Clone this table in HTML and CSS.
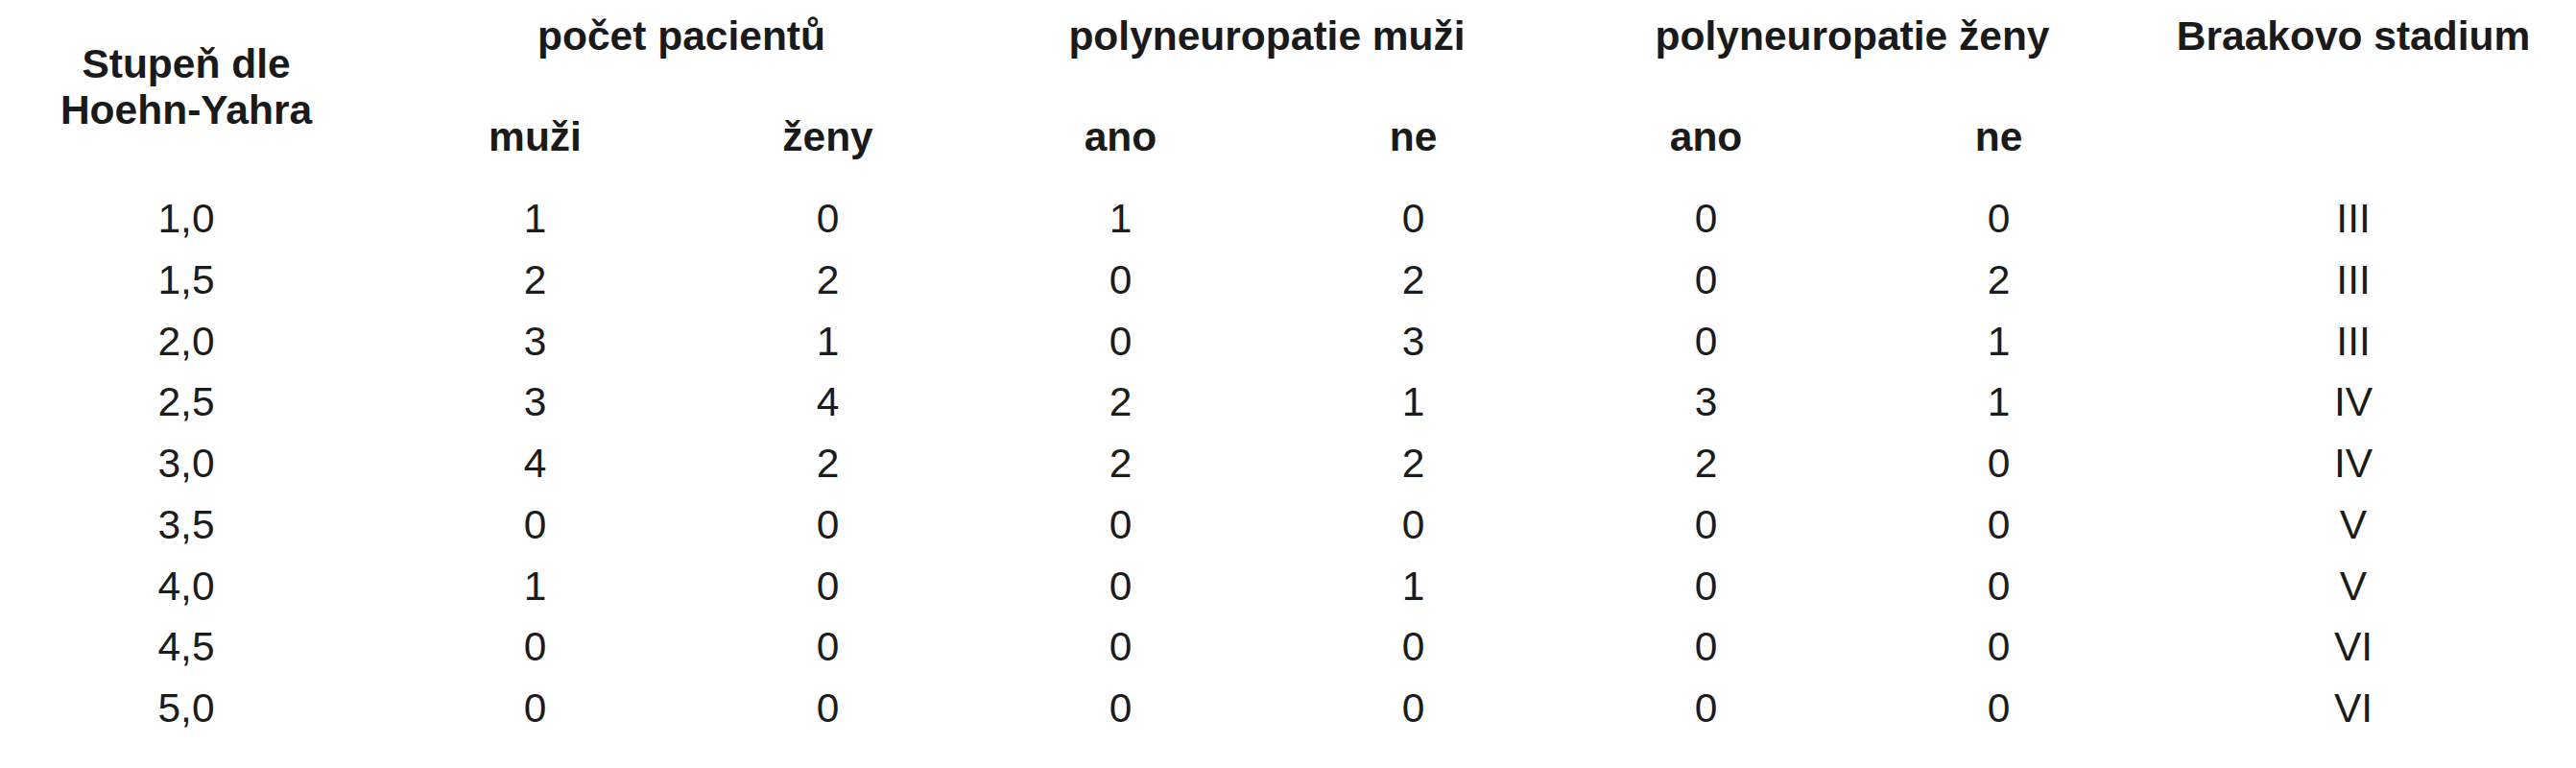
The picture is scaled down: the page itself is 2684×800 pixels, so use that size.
FILE: index.html
```html
<!DOCTYPE html>
<html lang="cs">
<head>
<meta charset="utf-8">
<title>Stupeň dle Hoehn-Yahra</title>
<link rel="stylesheet" href="styles.css">
</head>
<body>
<table class="data">
  <colgroup>
    <col class="w-first">
    <col class="w-mid"><col class="w-mid">
    <col class="w-mid"><col class="w-mid">
    <col class="w-mid"><col class="w-mid">
    <col class="w-last">
  </colgroup>
  <thead>
    <tr class="head-top">
      <th rowspan="2" class="first stage-head">Stupeň dle<br>Hoehn-Yahra</th>
      <th colspan="2" class="group">počet pacientů</th>
      <th colspan="2" class="group">polyneuropatie muži</th>
      <th colspan="2" class="group">polyneuropatie ženy</th>
      <th rowspan="2" class="group braak">Braakovo stadium</th>
    </tr>
    <tr class="head-sub">
      <th class="sub">muži</th>
      <th class="sub">ženy</th>
      <th class="sub">ano</th>
      <th class="sub">ne</th>
      <th class="sub">ano</th>
      <th class="sub">ne</th>
    </tr>
  </thead>
  <tbody>
    <tr><td class="first">1,0</td><td>1</td><td>0</td><td>1</td><td>0</td><td>0</td><td>0</td><td>III</td></tr>
    <tr><td class="first">1,5</td><td>2</td><td>2</td><td>0</td><td>2</td><td>0</td><td>2</td><td>III</td></tr>
    <tr><td class="first">2,0</td><td>3</td><td>1</td><td>0</td><td>3</td><td>0</td><td>1</td><td>III</td></tr>
    <tr><td class="first">2,5</td><td>3</td><td>4</td><td>2</td><td>1</td><td>3</td><td>1</td><td>IV</td></tr>
    <tr><td class="first">3,0</td><td>4</td><td>2</td><td>2</td><td>2</td><td>2</td><td>0</td><td>IV</td></tr>
    <tr><td class="first">3,5</td><td>0</td><td>0</td><td>0</td><td>0</td><td>0</td><td>0</td><td>V</td></tr>
    <tr><td class="first">4,0</td><td>1</td><td>0</td><td>0</td><td>1</td><td>0</td><td>0</td><td>V</td></tr>
    <tr><td class="first">4,5</td><td>0</td><td>0</td><td>0</td><td>0</td><td>0</td><td>0</td><td>VI</td></tr>
    <tr><td class="first">5,0</td><td>0</td><td>0</td><td>0</td><td>0</td><td>0</td><td>0</td><td>VI</td></tr>
  </tbody>
</table>
</body>
</html>
```
FILE: styles.css
```css
html, body {
  margin: 0;
  padding: 0;
  background: #ffffff;
}

body {
  font-family: "Liberation Sans", Arial, sans-serif;
  font-size: 42.5px;
  color: #1c1c1c;
}

.data {
  border-collapse: collapse;
  table-layout: fixed;
  width: 2669px;
}

.w-first { width: 405px; }
.w-mid { width: 305px; }
.w-last { width: 434px; }

.data th,
.data td {
  padding: 0;
  text-align: center;
  white-space: nowrap;
}

.data th {
  font-weight: 700;
  color: #1a1a1a;
}

.data .first {
  padding-right: 17px;
}

.head-top { height: 86px; }
.head-sub { height: 110px; }

.data .group {
  vertical-align: top;
  line-height: 76px;
}

.data .stage-head {
  vertical-align: top;
  line-height: 48px;
  padding-top: 43px;
}

.data .sub {
  vertical-align: top;
  line-height: 64px;
  padding-top: 25px;
}

.data tbody tr { height: 63.75px; }

.data td {
  line-height: 63.75px;
  vertical-align: middle;
}
```
